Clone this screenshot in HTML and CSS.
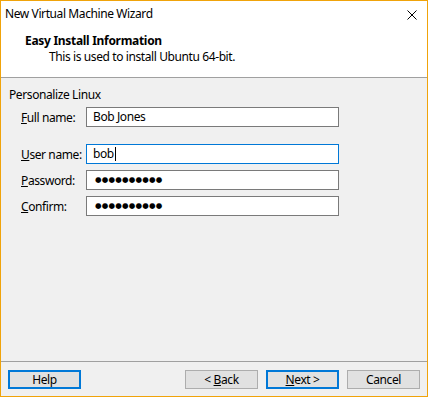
FILE: index.html
```html
<!DOCTYPE html>
<html>
<head>
<meta charset="utf-8">
<link rel="stylesheet" href="styles.css">
</head>
<body>
<div class="window">
  <div class="top">
    <div class="titlebar">
      <span class="title">New Virtual Machine Wizard</span>
      <svg class="close" width="10" height="10" viewBox="0 0 10 10"><path d="M0.5 0.5 L9.5 9.5 M9.5 0.5 L0.5 9.5" stroke="#000" stroke-width="1" fill="none"/></svg>
    </div>
    <div class="header">
      <div class="h-title">Easy Install Information</div>
      <div class="h-sub">This is used to install Ubuntu 64-bit.</div>
    </div>
  </div>
  <div class="body">
    <div class="group-label">Personalize Linux</div>
    <div class="row">
      <label class="lbl"><u>F</u>ull name:</label>
      <div class="input">Bob Jones</div>
    </div>
    <div class="row gap-big">
      <label class="lbl"><u>U</u>ser name:</label>
      <div class="input focus">bob<span class="caret"></span></div>
    </div>
    <div class="row">
      <label class="lbl"><u>P</u>assword:</label>
      <div class="input pw">●●●●●●●●●●</div>
    </div>
    <div class="row">
      <label class="lbl"><u>C</u>onfirm:</label>
      <div class="input pw">●●●●●●●●●●</div>
    </div>
  </div>
  <div class="footer">
    <button class="btn default">Help</button>
    <div class="spacer"></div>
    <button class="btn">&lt; <u>B</u>ack</button>
    <button class="btn default"><u>N</u>ext &gt;</button>
    <button class="btn">Cancel</button>
  </div>
</div>
</body>
</html>
```

FILE: styles.css
```css
html, body {
  margin: 0;
  padding: 0;
  background: #fff;
}
body {
  font-family: "Noto Sans", "Liberation Sans", sans-serif;
  font-size: 12px;
  letter-spacing: -0.4px;
  color: #000;
}
.window {
  width: 428px;
  height: 397px;
  box-sizing: border-box;
  border: 1px solid #f0a30a;
  display: flex;
  flex-direction: column;
  overflow: hidden;
}
.top {
  background: #fff;
  height: 76px;
  border-bottom: 1px solid #a0a0a0;
  flex: none;
}
.titlebar {
  height: 29px;
  display: flex;
  align-items: center;
  padding-left: 4px;
  padding-right: 10px;
}
.title {
  flex: 1;
  line-height: 16px;
  margin-top: -3px;
}
.close {
  margin-top: -2px;
}
.header {
  padding-left: 24px;
  padding-top: 3px;
}
.h-title {
  font-weight: bold;
  letter-spacing: -0.3px;
  line-height: 15px;
}
.h-sub {
  padding-left: 24px;
  line-height: 15px;
  margin-top: 1px;
}
.body {
  flex: 1;
  background: #f0f0f0;
  border-bottom: 1px solid #a0a0a0;
  padding: 9px 0 0 8px;
}
.group-label {
  line-height: 16px;
  margin-bottom: 4px;
}
.row {
  display: flex;
  align-items: center;
  height: 20px;
  margin-bottom: 6px;
  padding-left: 12px;
}
.gap-big {
  margin-top: 17px;
}
.lbl {
  width: 65px;
  flex: none;
}
.input {
  width: 253px;
  height: 20px;
  box-sizing: border-box;
  border: 1px solid #7a7a7a;
  background: #fff;
  padding-left: 6px;
  line-height: 18px;
  display: flex;
  align-items: center;
}
.input.focus {
  border-color: #0078d7;
}
.caret {
  display: inline-block;
  width: 1px;
  height: 14px;
  background: #000;
  margin-left: 1px;
}
.pw {
  font-family: "DejaVu Sans", sans-serif;
  font-size: 7.5px;
  letter-spacing: 0.2px;
  padding-left: 8px;
}
.footer {
  flex: none;
  height: 34px;
  background: #f0f0f0;
  display: flex;
  align-items: flex-start;
  padding: 8px 7px 0 7px;
  box-sizing: border-box;
}
.spacer {
  flex: 1;
}
.btn {
  font-family: inherit;
  font-size: 12px;
  letter-spacing: -0.4px;
  width: 73px;
  height: 19px;
  box-sizing: border-box;
  background: #e1e1e1;
  border: 1px solid #adadad;
  padding: 0;
  margin: 0 0 0 8px;
  color: #000;
  line-height: 15px;
}
.btn:first-child {
  margin-left: 0;
}
.btn.default {
  border: 2px solid #0078d7;
}
```
